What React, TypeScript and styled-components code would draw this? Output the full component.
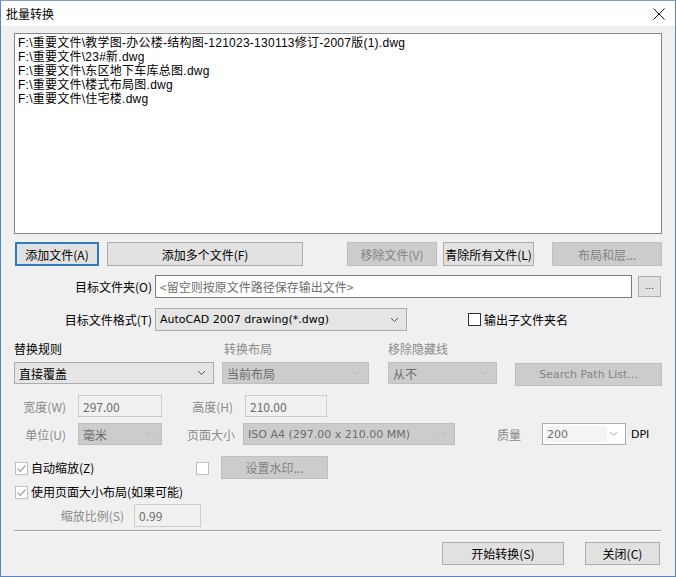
import React from "react";
import styled, { createGlobalStyle } from "styled-components";

const GlobalStyle = createGlobalStyle`
  html, body {
    margin: 0;
    padding: 0;
    background: #f0f0f0;
  }
  body {
    font-family: "Noto Sans CJK SC", "Noto Sans", sans-serif;
    font-size: 12px;
    color: #000;
  }
`;

const LATIN = `"DejaVu Sans", "Noto Sans CJK SC", sans-serif`;

const fileList = [
  "F:\\重要文件\\教学图-办公楼-结构图-121023-130113修订-2007版(1).dwg",
  "F:\\重要文件\\23#新.dwg",
  "F:\\重要文件\\东区地下车库总图.dwg",
  "F:\\重要文件\\楼式布局图.dwg",
  "F:\\重要文件\\住宅楼.dwg",
];

type Tone = "list" | "white" | "disabled";

const Chevron = ({ disabled }: { disabled?: boolean }) => (
  <svg width="9" height="6" viewBox="0 0 9 6">
    <path
      d="M1 1 L4.5 4.5 L8 1"
      fill="none"
      stroke={disabled ? "#b4b4b4" : "#555"}
      strokeWidth="1"
    />
  </svg>
);

const Tick = ({ disabled }: { disabled?: boolean }) => (
  <svg width="11" height="11" viewBox="0 0 11 11">
    <path
      d="M1.5 5.5 L4.2 8.2 L9.5 2.5"
      fill="none"
      stroke={disabled ? "#a8a8a8" : "#222"}
      strokeWidth="1.3"
    />
  </svg>
);

const App = () => {
  return (
    <>
      <GlobalStyle />
      <Window>
        <TitleBar>
          <Title>批量转换</Title>
          <CloseBox>
            <svg width="12" height="12" viewBox="0 0 12 12">
              <path d="M0.5 0.5 L11.5 11.5 M11.5 0.5 L0.5 11.5" stroke="#111" strokeWidth="1" />
            </svg>
          </CloseBox>
        </TitleBar>

        <Body>
          <ListBox>
            {fileList.map((f) => (
              <ListLine key={f}>{f}</ListLine>
            ))}
          </ListBox>

          <Row $mt={8}>
            <Button $w={84} $ml={1} $focused>添加文件(A)</Button>
            <Button $w={196} $ml={8}>添加多个文件(F)</Button>
            <Button $w={90} $ml={44} $disabled>移除文件(V)</Button>
            <Button $w={91} $ml={6}>青除所有文件(L)</Button>
            <Button $w={110} $ml={18} $disabled>布局和层...</Button>
          </Row>

          <Row $mt={9}>
            <FieldLabel>目标文件夹(O)</FieldLabel>
            <TextBox $w={477} $h={23} $placeholder>&lt;留空则按原文件路径保存输出文件&gt;</TextBox>
            <SmallButton>...</SmallButton>
          </Row>

          <Row $mt={10}>
            <FieldLabel>目标文件格式(T)</FieldLabel>
            <Select $w={252} $h={23} $tone="list">
              <LatinText>AutoCAD 2007 drawing(*.dwg)</LatinText>
              <Chevron />
            </Select>
            <CheckBox $ml={61}></CheckBox>
            <CheckLabel>输出子文件夹名</CheckLabel>
          </Row>

          <Row $mt={11} $align="flex-start">
            <Column $w={200}>
              <SectionLabel>替换规则</SectionLabel>
              <Select $w={200} $h={22} $tone="list">
                <span>直接覆盖</span>
                <Chevron />
              </Select>
            </Column>
            <Column $w={147} $ml={8}>
              <SectionLabel $muted $pl={2}>转换布局</SectionLabel>
              <Select $w={147} $h={22} $tone="disabled">
                <span>当前布局</span>
                <Chevron disabled />
              </Select>
            </Column>
            <Column $w={109} $ml={19}>
              <SectionLabel $muted>移除隐藏线</SectionLabel>
              <Select $w={109} $h={22} $tone="disabled">
                <span>从不</span>
                <Chevron disabled />
              </Select>
            </Column>
            <Column $w={147} $ml={18}>
              <SectionLabel />
              <Button $w={147} $h={23} $mt={1} $disabled $latin>
                Search Path List...
              </Button>
            </Column>
          </Row>

          <Row $mt={9}>
            <InlineLabel $w={64} $pr={12}>宽度(W)</InlineLabel>
            <TextBox $w={84} $h={22} $disabled>297.00</TextBox>
            <InlineLabel $w={83} $pr={12}>高度(H)</InlineLabel>
            <TextBox $w={82} $h={22} $disabled>210.00</TextBox>
          </Row>

          <Row $mt={6}>
            <InlineLabel $w={64} $pr={12}>单位(U)</InlineLabel>
            <Select $w={84} $h={22} $tone="disabled">
              <span>毫米</span>
              <Chevron disabled />
            </Select>
            <InlineLabel $w={81} $pr={8}>页面大小</InlineLabel>
            <Select $w={212} $h={22} $tone="disabled">
              <LatinText>ISO A4 (297.00 x 210.00 MM)</LatinText>
              <Chevron disabled />
            </Select>
            <InlineLabel $w={87} $pl={42} $left>质量</InlineLabel>
            <Select $w={84} $h={22} $tone="white">
              <ComboText>
                <LatinText>200</LatinText>
              </ComboText>
              <Chevron disabled />
            </Select>
            <Unit>DPI</Unit>
          </Row>

          <Row $mt={11} $align="flex-start">
            <CheckBox $ml={1} $mt={6} $disabled>
              <Tick disabled />
            </CheckBox>
            <CheckLabel $w={165} $mt={5}>自动缩放(Z)</CheckLabel>
            <CheckBox $mt={6} $disabled></CheckBox>
            <Button $w={107} $h={23} $ml={12} $disabled>设置水印...</Button>
          </Row>

          <Row $mt={6}>
            <CheckBox $ml={1} $disabled>
              <Tick disabled />
            </CheckBox>
            <CheckLabel>使用页面大小布局(如果可能)</CheckLabel>
          </Row>

          <Row $mt={5}>
            <InlineLabel $w={120} $pr={10}>缩放比例(S)</InlineLabel>
            <TextBox $w={67} $h={23} $disabled>0.99</TextBox>
          </Row>

          <Separator />

          <Row $mt={11} $justify="flex-end">
            <Button $w={122} $h={23}>开始转换(S)</Button>
            <Button $w={75} $h={23} $ml={21} $mr={2}>关闭(C)</Button>
          </Row>
        </Body>
      </Window>
    </>
  );
};

const Window = styled.div`
  width: 676px;
  height: 577px;
  box-sizing: border-box;
  border: 1px solid #5b84b8;
  border-top-color: #7f9dc4;
  background: #f0f0f0;
  display: flex;
  flex-direction: column;
  overflow: hidden;
`;

const TitleBar = styled.div`
  height: 25px;
  flex: none;
  background: #fff;
  display: flex;
  align-items: center;
  justify-content: space-between;
  padding: 0 10px 0 5px;
`;

const Title = styled.div`
  font-size: 12px;
  line-height: 14px;
`;

const CloseBox = styled.div`
  display: flex;
  align-items: center;
  margin-top: 1px;
`;

const Body = styled.div`
  display: flex;
  flex-direction: column;
  padding: 0 13px;
`;

const ListBox = styled.div`
  margin-top: 7px;
  height: 201px;
  box-sizing: border-box;
  background: #fff;
  border: 1px solid #828790;
  padding: 2px 3px;
  font-family: "Liberation Sans", "Noto Sans CJK SC", sans-serif;
  letter-spacing: 0.25px;
`;

const ListLine = styled.div`
  height: 14px;
  line-height: 14px;
  white-space: nowrap;
`;

const Row = styled.div<{ $mt?: number; $align?: string; $justify?: string }>`
  display: flex;
  align-items: ${(p) => p.$align || "center"};
  justify-content: ${(p) => p.$justify || "flex-start"};
  margin-top: ${(p) => p.$mt || 0}px;
`;

const Column = styled.div<{ $w: number; $ml?: number }>`
  width: ${(p) => p.$w}px;
  margin-left: ${(p) => p.$ml || 0}px;
  display: flex;
  flex-direction: column;
  gap: 6px;
`;

const Button = styled.div<{
  $w: number;
  $h?: number;
  $ml?: number;
  $mr?: number;
  $mt?: number;
  $disabled?: boolean;
  $focused?: boolean;
  $latin?: boolean;
}>`
  width: ${(p) => p.$w}px;
  height: ${(p) => p.$h || 24}px;
  margin-left: ${(p) => p.$ml || 0}px;
  margin-right: ${(p) => p.$mr || 0}px;
  margin-top: ${(p) => p.$mt || 0}px;
  box-sizing: border-box;
  flex: none;
  display: flex;
  align-items: center;
  justify-content: center;
  font-family: ${(p) => (p.$latin ? LATIN : "inherit")};
  font-size: ${(p) => (p.$latin ? "11px" : "12px")};
  background: ${(p) => (p.$disabled ? "#cccccc" : "#e1e1e1")};
  color: ${(p) => (p.$disabled ? "#838383" : "#000")};
  border: ${(p) =>
    p.$focused
      ? "2px solid #3079c3"
      : p.$disabled
      ? "1px solid #bfbfbf"
      : "1px solid #adadad"};
`;

const SmallButton = styled.div`
  width: 23px;
  height: 21px;
  margin-left: 6px;
  box-sizing: border-box;
  background: #e1e1e1;
  border: 1px solid #adadad;
  display: flex;
  align-items: center;
  justify-content: center;
  font-size: 10px;
  line-height: 10px;
  padding-bottom: 3px;
  color: #333;
`;

const FieldLabel = styled.div`
  width: 141px;
  flex: none;
  text-align: right;
  padding-right: 3px;
  box-sizing: border-box;
  white-space: nowrap;
`;

const InlineLabel = styled.div<{ $w: number; $pr?: number; $pl?: number; $left?: boolean }>`
  width: ${(p) => p.$w}px;
  flex: none;
  box-sizing: border-box;
  text-align: ${(p) => (p.$left ? "left" : "right")};
  padding-right: ${(p) => p.$pr || 0}px;
  padding-left: ${(p) => p.$pl || 0}px;
  color: #8a8a8a;
  white-space: nowrap;
`;

const SectionLabel = styled.div<{ $muted?: boolean; $pl?: number }>`
  height: 14px;
  line-height: 14px;
  padding-left: ${(p) => p.$pl || 0}px;
  color: ${(p) => (p.$muted ? "#8a8a8a" : "#000")};
  white-space: nowrap;
`;

const TextBox = styled.div<{ $w: number; $h: number; $disabled?: boolean; $placeholder?: boolean }>`
  width: ${(p) => p.$w}px;
  height: ${(p) => p.$h}px;
  flex: none;
  box-sizing: border-box;
  display: flex;
  align-items: center;
  padding-left: 4px;
  background: ${(p) => (p.$disabled ? "#f0f0f0" : "#fff")};
  border: 1px solid ${(p) => (p.$disabled ? "#cccccc" : "#7a7a7a")};
  color: ${(p) => (p.$disabled ? "#6d6d6d" : p.$placeholder ? "#6d6d6d" : "#000")};
  white-space: nowrap;
`;

const selectBg: Record<Tone, string> = {
  list: "#e5e5e5",
  white: "#fff",
  disabled: "#cccccc",
};

const selectBorder: Record<Tone, string> = {
  list: "#acacac",
  white: "#acacac",
  disabled: "#bfbfbf",
};

const Select = styled.div<{ $w: number; $h: number; $tone: Tone }>`
  width: ${(p) => p.$w}px;
  height: ${(p) => p.$h}px;
  flex: none;
  box-sizing: border-box;
  display: flex;
  align-items: center;
  justify-content: space-between;
  padding: 0 7px 0 4px;
  background: ${(p) => selectBg[p.$tone]};
  border: 1px solid ${(p) => selectBorder[p.$tone]};
  color: ${(p) => (p.$tone === "disabled" ? "#6d6d6d" : "#000")};
  white-space: nowrap;
  overflow: hidden;
`;

const ComboText = styled.div`
  width: 60px;
  height: 16px;
  margin-left: -2px;
  padding-left: 2px;
  display: flex;
  align-items: center;
  background: #f4f4f4;
  color: #6d6d6d;
`;

const LatinText = styled.span`
  font-family: ${LATIN};
  font-size: 11px;
`;

const Unit = styled.div`
  margin-left: 5px;
  font-family: ${LATIN};
  font-size: 11px;
`;

const CheckBox = styled.div<{ $ml?: number; $mt?: number; $disabled?: boolean }>`
  width: 13px;
  height: 13px;
  flex: none;
  box-sizing: border-box;
  margin-left: ${(p) => p.$ml || 0}px;
  margin-top: ${(p) => p.$mt || 0}px;
  background: #fff;
  border: 1px solid ${(p) => (p.$disabled ? "#bcbcbc" : "#333")};
  display: flex;
  align-items: center;
  justify-content: center;
`;

const CheckLabel = styled.div<{ $w?: number; $mt?: number }>`
  margin-left: 3px;
  margin-top: ${(p) => p.$mt || 0}px;
  width: ${(p) => (p.$w ? `${p.$w}px` : "auto")};
  flex: none;
  white-space: nowrap;
  line-height: 14px;
`;

const Separator = styled.div`
  margin-top: 3px;
  height: 1px;
  margin-right: 1px;
  background: #a0a0a0;
  box-shadow: 0 1px 0 #fff;
`;

export default App;
